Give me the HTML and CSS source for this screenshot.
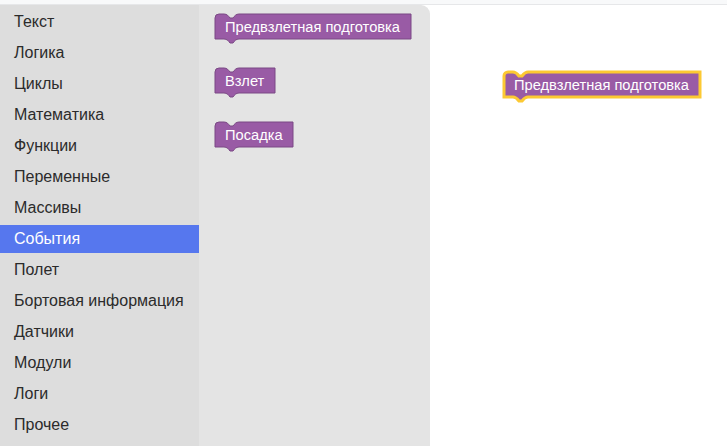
FILE: index.html
```html
<!DOCTYPE html>
<html lang="ru">
<head>
<meta charset="utf-8">
<link rel="stylesheet" href="styles.css">
</head>
<body>
<div class="topbar"></div>
<div class="main">
  <nav class="toolbox">
    <div class="cat">Текст</div>
    <div class="cat">Логика</div>
    <div class="cat">Циклы</div>
    <div class="cat">Математика</div>
    <div class="cat">Функции</div>
    <div class="cat">Переменные</div>
    <div class="cat">Массивы</div>
    <div class="cat selected">События</div>
    <div class="cat">Полет</div>
    <div class="cat">Бортовая информация</div>
    <div class="cat">Датчики</div>
    <div class="cat">Модули</div>
    <div class="cat">Логи</div>
    <div class="cat">Прочее</div>
  </nav>
  <div class="flyout">
    <svg class="block" width="198" height="31" viewBox="-1 -1 198 31">
      <path class="shape" d="M0,4 A4,4 0 0,1 4,0 H9 c3,0 4.5,2 6,4 h3 c1.5,-2 3,-4 6,-4 H196 V25 H24 c-3,0 -4.5,2 -6,4 h-3 c-1.5,-2 -3,-4 -6,-4 H0 Z"/>
      <text class="label" x="10" y="18">Предвзлетная подготовка</text>
    </svg>
    <svg class="block" width="62" height="31" viewBox="-1 -1 62 31">
      <path class="shape" d="M0,4 A4,4 0 0,1 4,0 H9 c3,0 4.5,2 6,4 h3 c1.5,-2 3,-4 6,-4 H60 V25 H24 c-3,0 -4.5,2 -6,4 h-3 c-1.5,-2 -3,-4 -6,-4 H0 Z"/>
      <text class="label" x="10" y="18">Взлет</text>
    </svg>
    <svg class="block" width="80" height="31" viewBox="-1 -1 80 31">
      <path class="shape" d="M0,4 A4,4 0 0,1 4,0 H9 c3,0 4.5,2 6,4 h3 c1.5,-2 3,-4 6,-4 H78 V25 H24 c-3,0 -4.5,2 -6,4 h-3 c-1.5,-2 -3,-4 -6,-4 H0 Z"/>
      <text class="label" x="10" y="18">Посадка</text>
    </svg>
  </div>
  <div class="workspace">
    <svg class="block ws-block" width="202" height="35" viewBox="-3 -3 202 35">
      <path class="shape sel" d="M0,4 A4,4 0 0,1 4,0 H9 c3,0 4.5,2 6,4 h3 c1.5,-2 3,-4 6,-4 H196 V25 H24 c-3,0 -4.5,2 -6,4 h-3 c-1.5,-2 -3,-4 -6,-4 H0 Z"/>
      <text class="label" x="10" y="18">Предвзлетная подготовка</text>
    </svg>
  </div>
</div>
</body>
</html>
```

FILE: styles.css
```css
html, body {
  margin: 0;
  padding: 0;
  height: 100%;
  overflow: hidden;
  background: #ffffff;
  font-family: "Liberation Sans", Arial, sans-serif;
}

.topbar {
  height: 4px;
  background: #f8f9fa;
  border-bottom: 1px solid #e6e7e9;
}

.main {
  display: flex;
  height: calc(100% - 5px);
}

.toolbox {
  width: 199px;
  flex: none;
  background: #dddddd;
  padding-top: 3px;
  box-sizing: border-box;
}

.cat {
  height: 28px;
  line-height: 28px;
  margin-bottom: 3px;
  padding-left: 14px;
  font-size: 16px;
  color: #2b2b2b;
  white-space: nowrap;
}

.cat.selected {
  background: #5677ee;
  color: #ffffff;
}

.flyout {
  width: 231px;
  flex: none;
  background: #e4e4e4;
  border-top-right-radius: 9px;
  display: flex;
  flex-direction: column;
  align-items: flex-start;
  gap: 23px;
  padding: 8px 0 0 15px;
  box-sizing: border-box;
}

.block {
  display: block;
  overflow: visible;
}

.shape {
  fill: #995ba5;
  stroke: #7b4985;
  stroke-width: 1;
}

.shape.sel {
  stroke: #fcc933;
  stroke-width: 3;
}

.label {
  fill: #ffffff;
  font-family: "Liberation Sans", Arial, sans-serif;
  font-size: 14.67px;
}

.workspace {
  flex: 1;
  position: relative;
}

.ws-block {
  position: absolute;
  left: 71px;
  top: 64px;
}
```
